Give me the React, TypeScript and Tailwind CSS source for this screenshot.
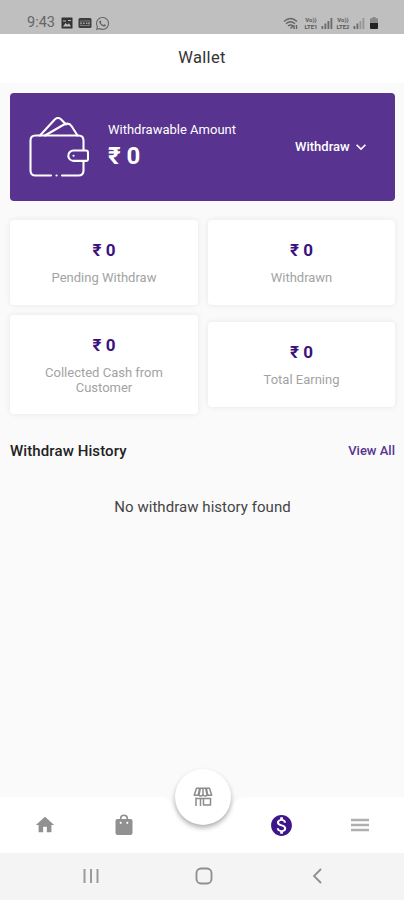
import React from "react";
import { MdHome, MdMonetizationOn, MdKeyboardArrowDown } from "react-icons/md";
import { FaWhatsapp } from "react-icons/fa";

interface StatCardProps {
  amount: string;
  label: string;
  className?: string;
}

const StatCard: React.FC<StatCardProps> = ({ amount, label, className = "" }) => (
  <div
    className={`flex flex-col items-center rounded-[4px] bg-white px-6 shadow-[0_0_5px_1px_rgba(0,0,0,0.06)] ${className}`}
  >
    <span className="text-[17px] leading-5 font-bold text-[#3b1280]">{amount}</span>
    <span className="mt-[10px] text-center text-[13px] leading-[15px] text-[#a3a3a3]">
      {label}
    </span>
  </div>
);

const Signal = ({ faded = false }: { faded?: boolean }) => (
  <svg viewBox="0 0 12 12" className="h-3 w-3" fill="#6b6b6b">
    <rect x="0.5" y="9" width="1.8" height="3" />
    <rect x="3.5" y="6.5" width="1.8" height="5.5" />
    <rect x="6.5" y="4" width="1.8" height="8" opacity={faded ? 0.5 : 1} />
    <rect x="9.5" y="1" width="1.8" height="11" opacity={faded ? 0.5 : 1} />
  </svg>
);

const VoLte = ({ sim }: { sim: string }) => (
  <span className="flex w-4 flex-col items-center text-[6px] leading-[7px] font-bold text-[#5a5a5a]">
    <span>Vo))</span>
    <span>LTE{sim}</span>
  </span>
);

const StatusBar = () => (
  <div className="flex h-[34px] items-start bg-[#bfbfbf] pt-[15px] pl-[27px] text-[#666]">
    <span className="w-[34px] text-[14.5px] leading-4">9:43</span>
    <svg viewBox="0 0 12 12" className="mt-[2px] h-3 w-3">
      <rect x="0.5" y="0.5" width="11" height="11" rx="0.5" fill="#333" />
      <path d="M2 9.5 4.6 6l1.8 1.8L8 6.2l2 3.3z" fill="#bfbfbf" />
      <path d="M2 4h3M7 3.5h3" stroke="#bfbfbf" />
    </svg>
    <svg viewBox="0 0 14 12" className="mt-[2px] ml-[5px] h-3 w-[14px]">
      <rect x="0.5" y="1" width="13" height="10" rx="1.5" fill="#3d3d3d" />
      <path d="M2 4h10M2 8.5h10" stroke="#8c8c8c" strokeWidth="0.8" />
      <path d="M3 5.3v2M5 6.2h1.6M8 6.2h1.4M11 5.3v2" stroke="#ddd" />
    </svg>
    <FaWhatsapp className="mt-[1px] ml-[3px] size-[15px]" />
    <div className="ml-[173px] flex h-[15px] items-center">
      <svg viewBox="0 0 16 13" className="mt-[1px] h-[13px] w-4" fill="none" stroke="#666" strokeWidth="1.4">
        <path d="M1 4.5Q7.5-1.5 14 4.5M3 6.8q4.5-4 9 0M5 9q2.5-2.2 5 0" />
        <path d="M7.5 11.5 10 9M11 8v4M13.5 8v4" />
      </svg>
      <div className="ml-1 flex items-center gap-[2px]">
        <VoLte sim="1" />
        <Signal />
        <VoLte sim="2" />
        <Signal faded />
      </div>
      <svg viewBox="0 0 8 12" className="ml-[5px] h-3 w-2">
        <path d="M2.5 0h3v1.2h1.5q1 0 1 1V6H0V2.2q0-1 1-1h1.5z" fill="#888" />
        <path d="M0 6h8v5q0 1-1 1H1q-1 0-1-1z" fill="#222" />
      </svg>
    </div>
  </div>
);

const WalletIcon = () => (
  <svg
    viewBox="0 0 60 62"
    className="mt-[2px] h-[62px] w-[60px]"
    fill="none"
    stroke="white"
    strokeWidth="2.1"
    strokeLinecap="round"
    strokeLinejoin="round"
  >
    <path d="M11 18.5 25.5 2.7q3.500-3.400 7 0L37 7.500" />
    <path d="M16 18.5 35 7.500q5-2.300 7.500 1.500l6 9.500" />
    <path d="M22 58.5H6.500q-5 0-5-5v-30q0-5 5-5h43q5 0 5 5V33" />
    <path d="M54.500 44v9.500q0 5-5 5H33" />
    <path d="M27.500 58.500h.1" />
    <path d="M57 33.500H44.500a5.200 5.200 0 0 0 0 10.400H57q2 0 2-2v-6.400q0-2-2-2z" />
    <path d="M44.500 38.700h.1" />
  </svg>
);

const BagIcon = () => (
  <svg viewBox="0 0 18 22" className="h-[22px] w-[18px]" fill="none">
    <rect x="0.5" y="5" width="17" height="16" rx="2" fill="currentColor" />
    <path d="M5.7 6V4.500a3.300 3.300 0 0 1 6.600 0V6" stroke="currentColor" strokeWidth="1.6" />
    <circle cx="5.7" cy="8.8" r="1.1" fill="white" />
    <circle cx="12.3" cy="8.8" r="1.1" fill="white" />
  </svg>
);

const StoreIcon = () => (
  <svg
    viewBox="0 0 20 20"
    className="size-5"
    fill="none"
    stroke="#8c8c8c"
    strokeWidth="1.5"
    strokeLinejoin="round"
  >
    <path d="M3.500 1.200h13l2.200 7H14.500q-2 1.500-4.500 0-2.500 1.500-4.500 0H1.200z" />
    <path d="M7 1.200 5.500 8.500M13 1.200l1.500 7.300" strokeWidth="2.2" />
    <path d="M10 1.200v7" />
    <path d="M2.500 11.500h15M3 10.500v8.500M7.500 19v-7M10.500 11.500h7v6.500h-7z" />
  </svg>
);

const BottomNav = () => (
  <div className="relative h-14">
    {/* bar with the notch for the round store button */}
    <svg viewBox="0 0 404 56" className="absolute inset-0 h-14 w-[404px]" fill="white">
      <path d="M0 0h160q9 0 13 8a32 32 0 0 0 60 0q4-8 13-8h158v56H0z" />
    </svg>
    <div className="relative grid h-14 grid-cols-[89px_69px_89px_69px_88px] items-center justify-items-center text-[#919191]">
      <MdHome className="size-[22px]" />
      <BagIcon />
      <span />
      <MdMonetizationOn className="size-[25px] text-[#3f1689]" />
      <svg viewBox="0 0 18 14" className="h-[14px] w-[18px]" stroke="#b0b0b0" strokeWidth="2.4">
        <path d="M0 2h18M0 7h18M0 12h18" />
      </svg>
    </div>
    <div className="absolute -top-[28px] left-[175px] flex size-14 items-center justify-center rounded-full bg-white shadow-[0_3px_5px_rgba(0,0,0,0.3)]">
      <StoreIcon />
    </div>
  </div>
);

const SystemNav = () => (
  <div className="flex h-[47px] items-center bg-[#f4f4f4] pb-[1px]">
    <svg viewBox="0 0 16 16" className="ml-[83px] size-4" stroke="#9a9a9a" strokeWidth="2">
      <path d="M1.5 1v14M8 1v14M14.5 1v14" />
    </svg>
    <svg viewBox="0 0 18 18" className="ml-[96px] size-[18px]" fill="none" stroke="#8e8e8e" strokeWidth="1.8">
      <rect x="1.5" y="1.5" width="15" height="15" rx="4.5" />
    </svg>
    <svg viewBox="0 0 10 16" className="ml-[99px] h-4 w-[10px]" fill="none" stroke="#8e8e8e" strokeWidth="1.8">
      <path d="M9 1 2 8l7 7" />
    </svg>
  </div>
);

const App: React.FC = () => {
  return (
    <div className="flex h-[900px] w-[404px] flex-col overflow-hidden bg-[#fafafa] font-[Roboto,sans-serif]">
      <StatusBar />
      <header className="flex h-[49px] items-center justify-center bg-white pb-[1px] text-[16.5px] tracking-[0.3px] text-[#333]">
        Wallet
      </header>

      <main className="flex-1 pt-[10px] pr-[9px] pl-[10px]">
        <section className="flex h-[108px] items-center rounded-[4px] bg-[#58338f] pl-[19px] text-white">
          <WalletIcon />
          <div className="ml-[19px] w-[187px]">
            <p className="text-[13px] leading-4">Withdrawable Amount</p>
            <p className="mt-[2px] text-[24px] leading-8 font-bold">₹ 0</p>
          </div>
          <button className="flex items-center text-[13px] font-medium">
            Withdraw
            <MdKeyboardArrowDown className="ml-[1px] size-5" />
          </button>
        </section>

        <div className="mt-[19px] flex items-center justify-between">
          <StatCard amount="₹ 0" label="Pending Withdraw" className="h-[85px] w-[188px] pt-5" />
          <StatCard amount="₹ 0" label="Withdrawn" className="h-[85px] w-[187px] pt-5" />
        </div>
        <div className="mt-[10px] flex items-center justify-between">
          <StatCard amount="₹ 0" label="Collected Cash from Customer" className="h-[99px] w-[188px] pt-5" />
          <StatCard amount="₹ 0" label="Total Earning" className="h-[85px] w-[187px] pt-5" />
        </div>

        <div className="mt-[27px] flex items-center justify-between">
          <h2 className="text-[15px] leading-5 font-medium tracking-[0.1px] text-[#222]">
            Withdraw History
          </h2>
          <span className="text-[13px] font-medium text-[#58338f]">View All</span>
        </div>
        <p className="mt-[36px] text-center text-[15px] leading-5 tracking-[0.05px] text-[#444]">
          No withdraw history found
        </p>
      </main>

      <BottomNav />
      <SystemNav />
    </div>
  );
};

export default App;
